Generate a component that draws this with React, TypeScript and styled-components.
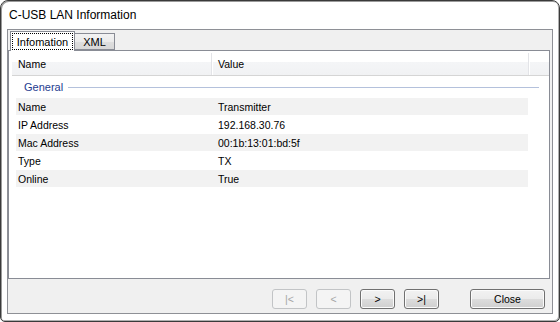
import styled, { createGlobalStyle } from "styled-components"

const GlobalStyle = createGlobalStyle`
    html, body {
        margin: 0;
        padding: 0;
        background: #ffffff;
    }
    body {
        font-family: "Liberation Sans", Arial, sans-serif;
        font-size: 10.5px;
        color: #000;
    }
`

const Window = styled.div`
    width: 560px;
    height: 322px;
    box-sizing: border-box;
    border: 1px solid #3a3a3a;
    border-radius: 8px 8px 5px 5px;
    box-shadow: inset 1px 1px 0 #9a9a9a, inset -1px -1px 0 #b0b0b0;
    background: #ffffff;
    padding: 0 6px 7px 6px;
    display: flex;
    flex-direction: column;
    overflow: hidden;
`

const TitleBar = styled.div`
    height: 28px;
    display: flex;
    align-items: center;
    padding-left: 2px;
    font-size: 12px;
    color: #000;
`

const Client = styled.div`
    flex: 1;
    border: 1px solid #8e9096;
    background: #f0f0f0;
    display: flex;
    flex-direction: column;
`

const TabStrip = styled.div`
    height: 20px;
    display: flex;
    align-items: flex-end;
    padding-left: 2px;
    position: relative;
    z-index: 2;
`

const Tab = styled.div<{ $active?: boolean; $w: number }>`
    box-sizing: border-box;
    width: ${p => p.$w}px;
    height: ${p => (p.$active ? 20 : 17)}px;
    margin-bottom: ${p => (p.$active ? -1 : 0)}px;
    border: 1px solid #898c95;
    border-bottom: ${p => (p.$active ? "none" : "1px solid #898c95")};
    border-left: ${p => (p.$active ? "1px solid #898c95" : "none")};
    background: ${p => (p.$active ? "#ffffff" : "linear-gradient(#f3f3f3 0%, #ebebeb 50%, #dedede 50%, #d8d8d8 100%)")};
    display: flex;
    align-items: ${p => (p.$active ? "flex-start" : "center")};
    justify-content: center;
    padding: ${p => (p.$active ? "1px 1px 0" : "0")};
`

const FocusBox = styled.div`
    box-sizing: border-box;
    width: 100%;
    height: 17px;
    border: 1px dotted #000;
    display: flex;
    align-items: center;
    justify-content: center;
    font-size: 11px;
`

const TabLabel = styled.span`
    font-size: 11px;
    padding-top: 1px;
`

const TabPage = styled.div`
    height: 229px;
    box-sizing: border-box;
    border: 1px solid #898c95;
    background: #ffffff;
    margin-right: 2px;
    position: relative;
    z-index: 1;
    padding: 2px 0 0 3px;
`

const ListView = styled.div`
    display: flex;
    flex-direction: column;
`

const HeaderRow = styled.div`
    height: 22px;
    display: flex;
    background: linear-gradient(#ffffff 0%, #ffffff 40%, #f4f5f7 40%, #f1f2f4 100%);
    border-bottom: 1px solid #d5d5d5;
`

const HeaderCell = styled.div<{ $w?: number }>`
    box-sizing: border-box;
    width: ${p => (p.$w ? `${p.$w}px` : "auto")};
    flex: ${p => (p.$w ? "none" : "1")};
    padding-left: 6px;
    display: flex;
    align-items: center;
    border-right: ${p => (p.$w ? "1px solid #e3e4e8" : "none")};
    box-shadow: ${p => (p.$w ? "1px 0 0 #ffffff" : "none")};
`

const GroupHeader = styled.div`
    height: 22px;
    display: flex;
    align-items: center;
    gap: 5px;
    padding-left: 12px;
    margin-right: 10px;
    color: #1e3c8f;
    font-size: 11px;
`

const GroupLine = styled.div`
    flex: 1;
    height: 1px;
    background: #b4c1dc;
`

const Row = styled.div<{ $shaded: boolean }>`
    height: 17px;
    margin: 0 21px 1px 4px;
    display: flex;
    align-items: center;
    background: ${p => (p.$shaded ? "#f2f2f2" : "transparent")};
`

const NameCell = styled.div`
    width: 196px;
    padding-left: 2px;
    box-sizing: border-box;
`

const ValueCell = styled.div`
    padding-left: 6px;
`

const ButtonBar = styled.div`
    flex: 1;
    display: flex;
    justify-content: flex-end;
    align-items: flex-start;
    gap: 9px;
    padding: 10px 7px 0 0;
`

const Button = styled.button<{ $w: number }>`
    box-sizing: border-box;
    width: ${p => p.$w}px;
    height: 20px;
    border: 1px solid #707070;
    border-radius: 3px;
    background: linear-gradient(#f2f2f2 0%, #ebebeb 50%, #dddddd 50%, #cfcfcf 100%);
    box-shadow: inset 0 0 0 1px #fbfbfb;
    font-family: "Liberation Sans", Arial, sans-serif;
    font-size: 10.5px;
    color: #000;
    padding: 0;
    display: flex;
    align-items: center;
    justify-content: center;

    &:disabled {
        border-color: #c2c4c6;
        background: #f4f4f4;
        box-shadow: none;
        color: #a6a6a6;
    }
`

const CloseButton = styled(Button)`
    margin-left: 22px;
`

const rows = [
    ["Name", "Transmitter"],
    ["IP Address", "192.168.30.76"],
    ["Mac Address", "00:1b:13:01:bd:5f"],
    ["Type", "TX"],
    ["Online", "True"],
]

export default function App(): JSX.Element {
    return (
        <>
            <GlobalStyle />
            <Window>
                <TitleBar>C-USB LAN Information</TitleBar>
                <Client>
                    <TabStrip>
                        <Tab $active $w={65}>
                            <FocusBox>Infomation</FocusBox>
                        </Tab>
                        <Tab $w={40}>
                            <TabLabel>XML</TabLabel>
                        </Tab>
                    </TabStrip>
                    <TabPage>
                        <ListView>
                            <HeaderRow>
                                <HeaderCell $w={200}>Name</HeaderCell>
                                <HeaderCell $w={317}>Value</HeaderCell>
                                <HeaderCell />
                            </HeaderRow>
                            <GroupHeader>
                                <span>General</span>
                                <GroupLine />
                            </GroupHeader>
                            {rows.map(([name, value], i) => (
                                <Row key={name} $shaded={i % 2 === 0}>
                                    <NameCell>{name}</NameCell>
                                    <ValueCell>{value}</ValueCell>
                                </Row>
                            ))}
                        </ListView>
                    </TabPage>
                    <ButtonBar>
                        <Button $w={35} disabled>|&lt;</Button>
                        <Button $w={35} disabled>&lt;</Button>
                        <Button $w={35}>&gt;</Button>
                        <Button $w={35}>&gt;|</Button>
                        <CloseButton $w={75}>Close</CloseButton>
                    </ButtonBar>
                </Client>
            </Window>
        </>
    )
}
